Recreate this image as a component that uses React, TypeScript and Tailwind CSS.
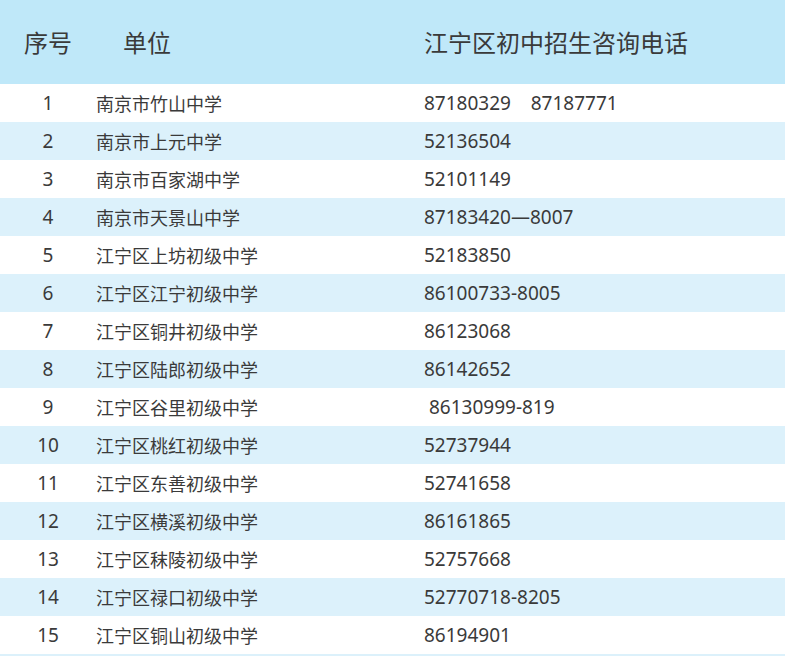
import React from "react";

const rows: [string, string, string][] = [
  ["1", "南京市竹山中学", "87180329\u00a0\u00a0\u00a0\u00a087187771"],
  ["2", "南京市上元中学", "52136504"],
  ["3", "南京市百家湖中学", "52101149"],
  ["4", "南京市天景山中学", "87183420—8007"],
  ["5", "江宁区上坊初级中学", "52183850"],
  ["6", "江宁区江宁初级中学", "86100733-8005"],
  ["7", "江宁区铜井初级中学", "86123068"],
  ["8", "江宁区陆郎初级中学", "86142652"],
  ["9", "江宁区谷里初级中学", "\u00a086130999-819"],
  ["10", "江宁区桃红初级中学", "52737944"],
  ["11", "江宁区东善初级中学", "52741658"],
  ["12", "江宁区横溪初级中学", "86161865"],
  ["13", "江宁区秣陵初级中学", "52757668"],
  ["14", "江宁区禄口初级中学", "52770718-8205"],
  ["15", "江宁区铜山初级中学", "86194901"],
];

export default function App() {
  return (
    <div
      className="w-[785px] h-[656px] bg-[#dcf1fb] text-[#3a3a3a] overflow-hidden"
      style={{ fontFamily: '"Noto Sans", "Noto Sans CJK SC", sans-serif' }}
    >
      <div
        className="flex h-[84px] items-center bg-[#bfe8f9] text-[24px]"
        style={{ fontFamily: '"Noto Sans CJK SC", sans-serif' }}
      >
        <div className="w-[96px] text-center">序号</div>
        <div className="w-[328px] pl-[27px]">单位</div>
        <div className="flex-1">江宁区初中招生咨询电话</div>
      </div>
      {rows.map(([n, name, tel], i) => (
        <div
          key={n}
          className={
            i % 2 === 0
              ? "flex h-[38px] items-center bg-white"
              : "flex h-[38px] items-center bg-[#dcf1fb]"
          }
        >
          <div className="w-[96px] text-center text-[19px]">{n}</div>
          <div
            className="w-[328px] pl-[-1px] text-[18px]"
            style={{ fontFamily: '"Noto Sans CJK SC", sans-serif' }}
          >
            {name}
          </div>
          <div className="flex-1 whitespace-pre text-[19px]">{tel}</div>
        </div>
      ))}
    </div>
  );
}
